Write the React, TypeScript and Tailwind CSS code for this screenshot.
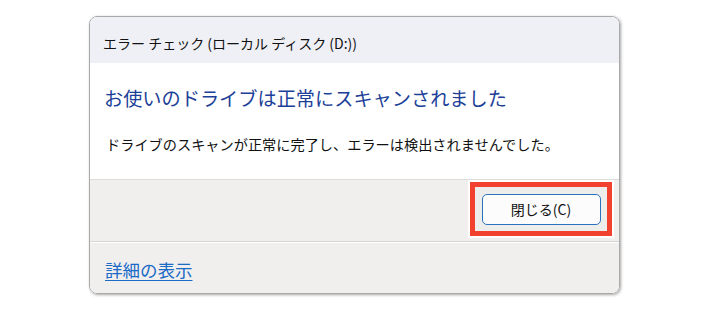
export default function App() {
  return (
    <div
      className="w-[708px] h-[310px] bg-white pl-[89px] pt-[16px]"
      style={{ fontFamily: '"Noto Sans CJK JP", "Noto Sans", sans-serif' }}
    >
      <div className="w-[531px] h-[278px] flex flex-col overflow-hidden rounded-[8px] border border-[#a9a9a9] shadow-[1px_1px_3px_rgba(0,0,0,0.35)]">
        {/* Title bar */}
        <div className="h-[46px] shrink-0 bg-[#eff0f6] flex items-center pl-[13px] pt-[6px] text-[14px] leading-none text-[#111111]">
          エラー チェック (ローカル ディスク (D:))
        </div>

        {/* Content */}
        <div className="h-[116px] shrink-0 bg-white flex flex-col pl-[14px]">
          <div className="mt-[25px] text-[19.2px] leading-[20px] text-[#1c3f98]">
            お使いのドライブは正常にスキャンされました
          </div>
          <div className="mt-[28px] text-[14.2px] leading-[16px] text-[#111111] pl-[2px]">
            ドライブのスキャンが正常に完了し、エラーは検出されませんでした。
          </div>
        </div>

        {/* Button area */}
        <div className="h-[62px] shrink-0 bg-[#f0efee] border-t border-[#dcdbda] flex justify-end items-start pr-[7px] pt-[2px]">
          <div className="w-[142px] h-[54px] border-[5px] border-[#f2412f] outline-2 outline-white bg-[#ededec] flex items-center justify-center">
            <button className="w-[119px] h-[31px] rounded-[5px] border-[1.5px] border-[#2a72bd] bg-[#fcfcfc] text-[14px] leading-none text-[#111111] flex items-center justify-center">
              閉じる(C)
            </button>
          </div>
        </div>

        {/* Footer */}
        <div className="flex-1 bg-[#f0efee] border-t border-[#d6d5d4] shadow-[inset_0_1px_0_#ffffff] flex items-start pl-[15px] pt-[18px]">
          <a className="text-[17.5px] leading-[20px] text-[#1a6ac6] underline underline-offset-[3px] cursor-pointer">
            詳細の表示
          </a>
        </div>
      </div>
    </div>
  );
}
